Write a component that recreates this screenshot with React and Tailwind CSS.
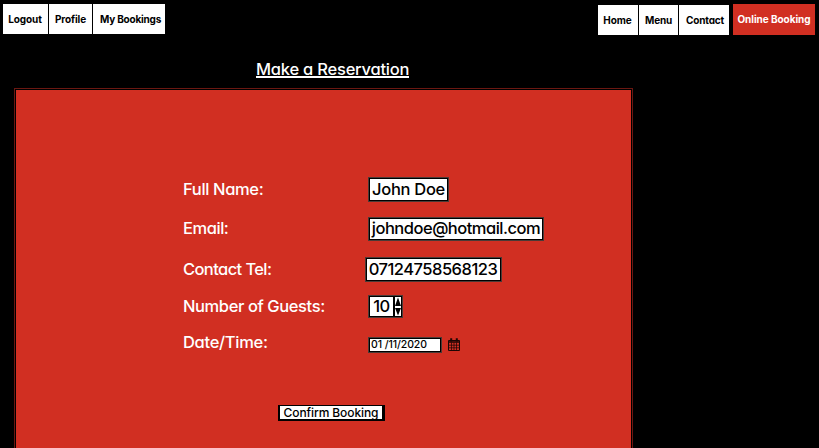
const tabBase =
  "flex h-full items-center justify-center whitespace-nowrap bg-white text-[10px] font-bold text-black";

function Field({ children, className }) {
  return (
    <div
      className={
        "flex items-center justify-center whitespace-nowrap border-2 border-black bg-white font-medium text-black outline-1 -outline-offset-1 outline-[#4a3a36] " +
        className
      }
    >
      {children}
    </div>
  );
}

function Row({ label, labelClass = "", className, children }) {
  return (
    <div className={"flex items-center " + className}>
      <div className={"w-[185px] shrink-0 whitespace-nowrap text-[16.5px] leading-6 font-medium text-white " + labelClass}>
        {label}
      </div>
      {children}
    </div>
  );
}

function CalendarIcon() {
  return (
    <svg width="12" height="13" viewBox="0 0 12 13" fill="none" stroke="#1c0604" className="mb-px ml-[6px]">
      <path d="M.5 2.5h11v10H.5z" />
      <path d="M1 4h10" strokeWidth="1.5" />
      <path d="M1 7.2h10M1 9.8h10M3.5 4.5v8M6 4.5v8M8.5 4.5v8" strokeWidth=".75" />
      <path d="M3.2.2v3.3M8.8.2v3.3" strokeWidth="2" />
    </svg>
  );
}

export default function App() {
  return (
    <div className="flex h-[448px] w-[819px] flex-col overflow-hidden bg-black font-['Inter','Liberation_Sans',sans-serif] [font-feature-settings:'cv11']">
      <header className="flex h-[39px] shrink-0 items-start justify-between pr-[4px] pl-[3px]">
        <nav className="mt-[4px] flex h-[30px] gap-px">
          <div className={tabBase + " w-[45px] pr-px tracking-[-0.1px]"}>Logout</div>
          <div className={tabBase + " w-[43px] tracking-[-0.1px]"}>Profile</div>
          <div className={tabBase + " w-[72px] pl-[3px] tracking-[-0.2px]"}>My Bookings</div>
        </nav>
        <nav className="flex">
          <div className="mt-[5px] flex h-[30px] gap-px">
            <div className={tabBase + " w-[40px] pr-px tracking-[-0.1px]"}>Home</div>
            <div className={tabBase + " w-[39px] tracking-[-0.2px]"}>Menu</div>
            <div className={tabBase + " w-[50px] pl-[2px] tracking-[-0.15px]"}>Contact</div>
          </div>
          <div className="mt-[4px] ml-[4px] flex h-[31px] w-[82px] items-center justify-center bg-[#d12f22] text-[10px] font-bold tracking-[-0.05px] whitespace-nowrap text-white">
            Online Booking
          </div>
        </nav>
      </header>

      <h1 className="mt-[20px] ml-[256px] h-[19px] w-[153px] shrink-0 border-b-2 border-white text-[16.5px] leading-5 font-medium tracking-[-0.22px] whitespace-nowrap text-white">
        Make a Reservation
      </h1>

      <main className="mt-[10px] ml-[14px] flex h-[400px] w-[619px] shrink-0 flex-col border border-[#6b1711] p-px">
        <form className="flex flex-1 flex-col bg-[#d12f22] pt-[87px] pl-[167px]">
          <Row label="Full Name:" labelClass="-mt-[2px] tracking-[-0.35px]" className="h-[25px]">
            <Field className="h-[25px] w-[81px] text-[16.5px] tracking-[-0.3px]">John Doe</Field>
          </Row>
          <Row label="Email:" labelClass="-mt-[2px] tracking-[-0.45px]" className="mt-[15px] h-[24px]">
            <Field className="h-[24px] w-[176px] pb-px text-[16.5px] tracking-[-0.5px]">johndoe@hotmail.com</Field>
          </Row>
          <Row label="Contact Tel:" labelClass="-mt-[2px] tracking-[-0.6px]" className="mt-[16px] h-[25px]">
            <Field className="-ml-[3px] h-[25px] w-[137px] pr-px text-[16.5px] tracking-[-0.5px]">07124758568123</Field>
          </Row>
          <Row label="Number of Guests:" labelClass="-mt-[2px] tracking-[-0.4px]" className="mt-[13px] h-[23px]">
            <Field className="h-[23px] w-[35px] text-[16.5px] tracking-[-0.4px]">
              <span className="flex-1 text-center">10</span>
              <span className="flex h-full w-[8px] items-center justify-center border-l-2 border-black">
                <svg width="6" height="19" viewBox="0 0 6 19" fill="black">
                  <path d="M3 .5 6 9H0zM0 11h6l-3 7.5z" />
                </svg>
              </span>
            </Field>
          </Row>
          <Row label="Date/Time:" labelClass="-mt-[7px] tracking-[-0.3px]" className="mt-[19px] h-[16px]">
            <Field className="h-[16px] w-[74px] pr-[12px] text-[10.5px] tracking-[-0.1px]">01 /11/2020</Field>
            <CalendarIcon />
          </Row>
          <button
            type="button"
            className="mt-[52px] ml-[95px] flex h-[16px] w-[107px] items-center justify-center border-t border-r-[3px] border-b-2 border-l-2 border-black bg-white text-[12px] font-medium tracking-[-0.1px] whitespace-nowrap text-black"
          >
            Confirm Booking
          </button>
        </form>
      </main>
    </div>
  );
}
